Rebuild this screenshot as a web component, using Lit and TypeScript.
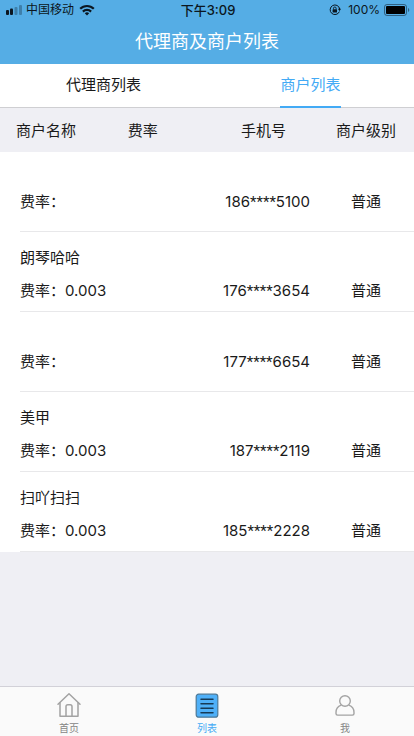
import { LitElement, html, css, svg, nothing } from "lit";
import { customElement, property, state } from "lit/decorators.js";
import { classMap } from "lit/directives/class-map.js";

interface Merchant {
  name: string;
  rate: string;
  phone: [string, string];
  level: string;
}

const MERCHANTS: Merchant[] = [
  { name: "", rate: "", phone: ["186", "5100"], level: "普通" },
  { name: "朗琴哈哈", rate: "0.003", phone: ["176", "3654"], level: "普通" },
  { name: "", rate: "", phone: ["177", "6654"], level: "普通" },
  { name: "美甲", rate: "0.003", phone: ["187", "2119"], level: "普通" },
  { name: "扫吖扫扫", rate: "0.003", phone: ["185", "2228"], level: "普通" },
];

@customElement("status-bar")
export class StatusBar extends LitElement {
  static styles = css`
    :host {
      display: grid;
      grid-template-columns: 1fr auto 1fr;
      align-items: center;
      height: 20px;
      padding: 0 4px 0 6px;
      font-size: 12px;
      line-height: 20px;
      color: #0b1620;
    }
    .side {
      display: flex;
      align-items: center;
      gap: 4px;
    }
    .end {
      justify-content: flex-end;
    }
    .time {
      font-weight: 500;
      font-size: 13px;
    }
    svg {
      display: block;
      flex: none;
    }
  `;

  render() {
    return html`
      <div class="side">
        <svg width="16" height="10" viewBox="0 0 16 10" fill="currentColor">
          <rect x="0" y="5" width="3" height="5" rx="1" />
          <rect x="4" y="3.5" width="3" height="6.5" rx="1" />
          <rect x="8.5" y="2" width="3" height="8" rx="1" opacity="0.3" />
          <rect x="13" y="0" width="3" height="10" rx="1" opacity="0.3" />
        </svg>
        <span>中国移动</span>
        <svg width="18" height="12" viewBox="0 0 18 12" fill="none" stroke="currentColor" stroke-width="2.2">
          <path d="M2.2 4.8a9.6 9.6 0 0 1 13.6 0" />
          <path d="M4.9 7.6a5.8 5.8 0 0 1 8.2 0" />
          <path d="M9 11.6 6.8 9.3a3.2 3.2 0 0 1 4.4 0z" fill="currentColor" stroke="none" />
        </svg>
      </div>
      <span class="time">下午3:09</span>
      <div class="side end">
        <svg width="12" height="12" viewBox="0 0 12 12" fill="none" stroke="currentColor">
          <path d="M10.4 7.6a4.8 4.8 0 1 1 .3-2.6" />
          <path d="M8.9 4.8h3.1l-1.4 2.2z" fill="currentColor" stroke="none" />
          <rect x="3.6" y="5.2" width="4.4" height="3.4" rx="0.5" fill="currentColor" stroke="none" />
          <path d="M4.5 5.4V4.3a1.3 1.3 0 0 1 2.6 0v1.1" stroke-width="0.9" />
        </svg>
        <span>&nbsp;100%</span>
        <svg width="26" height="12" viewBox="0 0 26 12">
          <rect x="0.5" y="0.5" width="22" height="11" rx="2.5" fill="none" stroke="currentColor" opacity="0.5" />
          <rect x="2" y="2" width="19" height="8" rx="1" fill="#000" />
          <path d="M24 4v4a2.2 2.2 0 0 0 0-4z" fill="currentColor" opacity="0.5" />
        </svg>
      </div>
    `;
  }
}

@customElement("merchant-table")
export class MerchantTable extends LitElement {
  @property({ attribute: false }) rows: Merchant[] = [];

  static styles = css`
    :host {
      display: block;
    }
    table {
      width: 100%;
      border-collapse: collapse;
      table-layout: fixed;
      font-size: 15px;
      line-height: 24px;
    }
    th,
    td {
      box-sizing: border-box;
      padding: 0;
      font-weight: 400;
      text-align: left;
    }
    th {
      height: 44px;
      padding-top: 2px;
    }
    .col-name {
      width: 27%;
    }
    .col-level {
      width: 96px;
    }
    th.name,
    th.rate {
      padding-left: 16px;
    }
    th.phone {
      text-align: right;
      padding-right: 32px;
    }
    th.level,
    td.level {
      text-align: center;
    }
    tbody tr {
      background: linear-gradient(#e8e8ea, #e8e8ea) right bottom / calc(100% - 20px) 1px no-repeat #fff;
    }
    td {
      height: 80px;
      padding-bottom: 9px;
      vertical-align: bottom;
    }
    .unnamed td {
      padding-bottom: 18px;
    }
    .merchant {
      padding-left: 20px;
    }
    .title {
      margin-bottom: 9px;
    }
    td.phone {
      text-align: right;
      padding-right: 8px;
    }
    .mask {
      font-family: Roboto, sans-serif;
    }
  `;

  render() {
    return html`
      <table>
        <colgroup>
          <col class="col-name" />
          <col />
          <col />
          <col class="col-level" />
        </colgroup>
        <thead>
          <tr>
            <th class="name" scope="col">商户名称</th>
            <th class="rate" scope="col">费率</th>
            <th class="phone" scope="col">手机号</th>
            <th class="level" scope="col">商户级别</th>
          </tr>
        </thead>
        <tbody>
          ${this.rows.map(
            (m) => html`
              <tr class=${classMap({ unnamed: !m.name })}>
                <td class="merchant" colspan="2">
                  ${m.name ? html`<div class="title">${m.name}</div>` : nothing}
                  <div>费率：${m.rate}</div>
                </td>
                <td class="phone">${m.phone[0]}<span class="mask">****</span>${m.phone[1]}</td>
                <td class="level">${m.level}</td>
              </tr>
            `
          )}
        </tbody>
      </table>
    `;
  }
}

const ICONS = {
  home: svg`
    <g fill="none" stroke="#a3a3a3" stroke-width="1.5" stroke-linejoin="round" stroke-linecap="round">
      <path d="M2 12.2 13 1.8l11 10.4" />
      <path d="M4 10.8V24.2h18V10.8" />
      <path d="M10 24v-9.5a1.8 1.8 0 0 1 1.8-1.8h2.4a1.8 1.8 0 0 1 1.8 1.8V24" />
    </g>`,
  list: svg`
    <rect x="2.2" y="2.2" width="21.6" height="23" rx="2.5" fill="#4fb0f8" stroke="#4c7896" stroke-width="1.2" />
    <path d="M7 7.2h12M7 11.7h12M7 16.2h12M7 20.7h12" stroke="#173a56" stroke-width="1.5" stroke-linecap="round" />`,
  me: svg`
    <g fill="none" stroke="#a3a3a3" stroke-width="1.4" stroke-linejoin="round">
      <circle cx="13" cy="9" r="5.3" />
      <path d="M9.2 13.2C6 14.4 4 17 4 20.4v1.2c0 .9.6 1.5 1.5 1.5h15c.9 0 1.5-.6 1.5-1.5v-1.2c0-3.4-2-6-5.2-7.2" />
    </g>`,
};

const NAV = [
  { label: "首页", icon: ICONS.home },
  { label: "列表", icon: ICONS.list },
  { label: "我", icon: ICONS.me },
];

@customElement("bottom-nav")
export class BottomNav extends LitElement {
  @property({ type: Number }) current = 1;

  static styles = css`
    nav {
      display: flex;
      background: #fafafa;
      border-top: 1px solid #d2d1d8;
    }
    a {
      flex: 1;
      display: flex;
      flex-direction: column;
      align-items: center;
      gap: 1px;
      padding-top: 5px;
      font-size: 10px;
      line-height: 15px;
      color: #858585;
      text-decoration: none;
    }
    a.active {
      color: #43aaf5;
    }
    svg {
      display: block;
    }
  `;

  render() {
    return html`
      <nav>
        ${NAV.map(
          (item, i) => html`
            <a href="#" class=${classMap({ active: i === this.current })}>
              <svg width="26" height="28" viewBox="0 0 26 28">${item.icon}</svg>
              ${item.label}
            </a>
          `
        )}
      </nav>
    `;
  }
}

@customElement("app-root")
export class AppRoot extends LitElement {
  @state() private tab = 1;

  static styles = css`
    :host {
      display: flex;
      flex-direction: column;
      min-height: 100vh;
      background: #efeff4;
      color: #1a1a1a;
      font-family: Inter, "Noto Sans CJK SC", sans-serif;
    }
    header {
      background: #55ade5;
    }
    h1 {
      margin: 0;
      font-size: 18px;
      font-weight: 400;
      line-height: 44px;
      text-align: center;
      color: #fff;
    }
    .tabs {
      display: flex;
      background: #fff;
      border-bottom: 1px solid #cfcfd2;
    }
    .cell {
      flex: 1;
      display: flex;
      justify-content: center;
    }
    button {
      border: 0;
      border-bottom: 2px solid transparent;
      margin: 0 0 -1px;
      padding: 0;
      background: none;
      font: inherit;
      font-size: 15px;
      line-height: 42px;
      color: inherit;
      cursor: pointer;
    }
    button.active {
      color: #43aaf5;
      border-color: #43aaf5;
    }
    main {
      flex: 1;
    }
  `;

  render() {
    return html`
      <header>
        <status-bar></status-bar>
        <h1>代理商及商户列表</h1>
      </header>
      <div class="tabs" role="tablist">
        ${["代理商列表", "商户列表"].map(
          (label, i) => html`
            <div class="cell" role="presentation">
              <button
                role="tab"
                aria-selected=${i === this.tab ? "true" : "false"}
                class=${classMap({ active: i === this.tab })}
                @click=${() => (this.tab = i)}
              >
                ${label}
              </button>
            </div>
          `
        )}
      </div>
      <main>
        <merchant-table .rows=${MERCHANTS}></merchant-table>
      </main>
      <bottom-nav></bottom-nav>
    `;
  }
}
